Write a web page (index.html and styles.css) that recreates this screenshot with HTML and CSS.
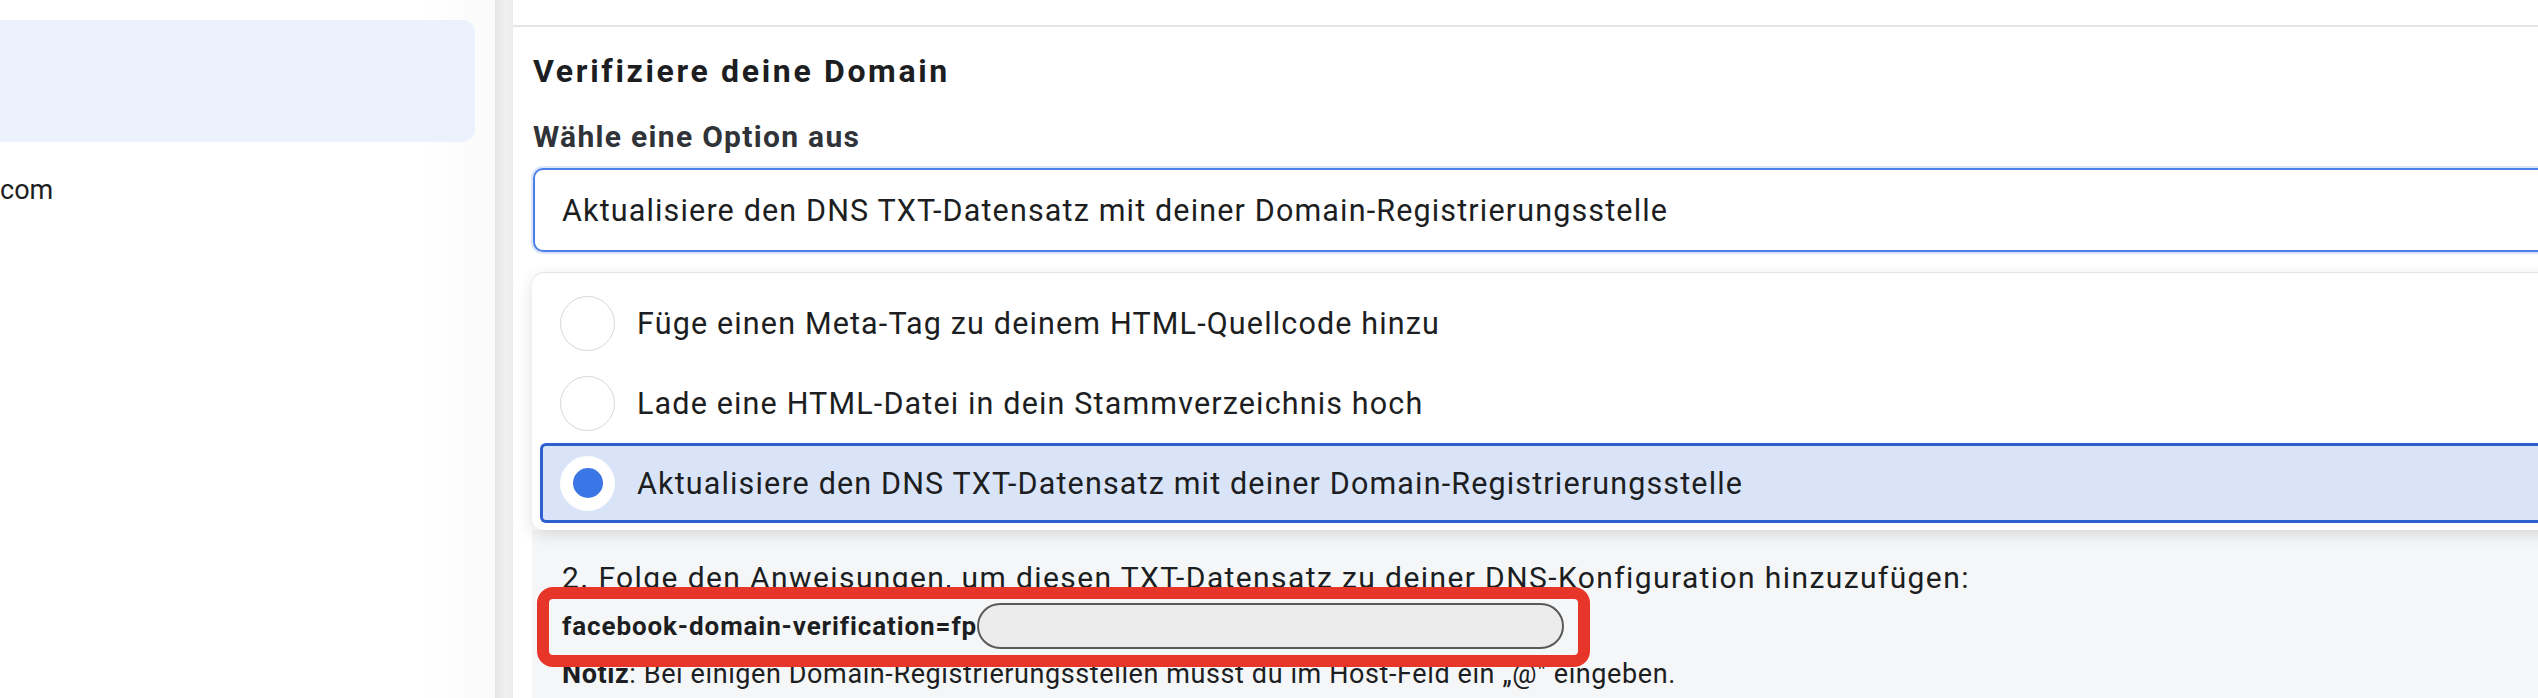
FILE: index.html
```html
<!DOCTYPE html>
<html lang="de">
<head>
  <meta charset="UTF-8">
  <title>Domain verifizieren</title>
  <meta name="viewport" content="width=device-width, initial-scale=1.0">
  <link rel="stylesheet" href="styles.css">
</head>
<body>
  <div class="page">
    <aside class="sidebar">
      <div class="nav-active"></div>
      <div class="nav-item">com</div>
    </aside>
    <div class="divider"></div>

    <main class="main">
      <div class="topbar"></div>
      <section class="verify">
        <h2 class="title">Verifiziere deine Domain</h2>
        <div class="field-label">Wähle eine Option aus</div>
        <div class="select">Aktualisiere den DNS TXT-Datensatz mit deiner Domain-Registrierungsstelle</div>

        <ul class="options">
          <li class="option"><span class="radio"></span>Füge einen Meta-Tag zu deinem HTML-Quellcode hinzu</li>
          <li class="option"><span class="radio"></span>Lade eine HTML-Datei in dein Stammverzeichnis hoch</li>
          <li class="option selected"><span class="radio"></span>Aktualisiere den DNS TXT-Datensatz mit deiner Domain-Registrierungsstelle</li>
        </ul>

        <div class="instructions">
          <p class="step">2. Folge den Anweisungen, um diesen TXT-Datensatz zu deiner DNS-Konfiguration hinzuzufügen:</p>
          <div class="record">
            <b>facebook-domain-verification=fp</b><span class="redacted"></span>
            <span class="highlight"></span>
          </div>
          <p class="note"><b>Notiz</b>: Bei einigen Domain-Registrierungsstellen musst du im Host-Feld ein „@" eingeben.</p>
        </div>
      </section>
    </main>
  </div>
</body>
</html>
```

FILE: styles.css
```css
body {
  margin: 0;
  font-family: Roboto, "Liberation Sans", Arial, sans-serif;
  color: #1c1e21;
  background: #fff;
}
.page {
  display: flex;
  width: 2538px;
  height: 698px;
  overflow: hidden;
}
.sidebar {
  width: 495px;
  flex-shrink: 0;
  background: linear-gradient(to right, #fff 85%, #fafafa);
}
.nav-active {
  margin-top: 20px;
  width: 475px;
  height: 122px;
  background: #ebf1fd;
  border-radius: 0 13px 13px 0;
}
.nav-item {
  margin-top: 28px;
  font-size: 27px;
  line-height: 40px;
}
.divider {
  width: 18px;
  flex-shrink: 0;
  background: linear-gradient(to right, #e6e6e6, #f0f0f0 60%, #ececec);
}
.main {
  flex: 1;
  min-width: 0;
  overflow: hidden;
}
.topbar {
  height: 25px;
  border-bottom: 2px solid #e6e6e6;
}
.verify {
  padding-left: 20px;
}
.title {
  margin: 24px 0 0;
  font-size: 32px;
  line-height: 40px;
  font-weight: 700;
  letter-spacing: 2.65px;
}
.field-label {
  margin-top: 26px;
  font-size: 30px;
  line-height: 40px;
  font-weight: 700;
  letter-spacing: 1.3px;
  color: #303338;
}
.select {
  box-sizing: border-box;
  display: flex;
  align-items: center;
  margin-top: 11px;
  margin-right: -20px;
  height: 84px;
  padding-left: 27px;
  border: 2px solid #4b80e8;
  border-radius: 10px;
  box-shadow: 0 0 0 2px #dbe6fb;
  font-size: 30.5px;
  letter-spacing: 1.15px;
}
.options {
  position: relative;
  z-index: 1;
  list-style: none;
  margin: 21px -20px 0 -1px;
  padding: 10px 0 7px 8px;
  background: #fff;
  border-radius: 12px 0 0 12px;
  box-shadow: 0 -1px 0 #e2e2e2, 0 4px 16px rgba(0, 0, 0, 0.13);
}
.option {
  box-sizing: border-box;
  display: flex;
  align-items: center;
  height: 80px;
  padding-left: 17px;
  border: 3px solid transparent;
  border-right: 0;
  border-radius: 6px 0 0 6px;
  font-size: 30.5px;
  letter-spacing: 1.15px;
}
.option.selected {
  background: #dae4f8;
  border-color: #2d60cd;
}
.radio {
  box-sizing: border-box;
  width: 55px;
  height: 55px;
  margin-right: 22px;
  border: 1.5px solid #d8d8d8;
  border-radius: 50%;
  background: #fff;
  display: flex;
  align-items: center;
  justify-content: center;
  flex-shrink: 0;
}
.selected .radio {
  border-color: #fff;
}
.selected .radio::after {
  content: "";
  width: 30px;
  height: 30px;
  border-radius: 50%;
  background: #3a76e6;
}
.instructions {
  margin: 0 -20px 0 -1px;
  padding: 23px 0 0 30px;
  height: 200px;
  background: #f5f6f7;
}
.step,
.note {
  margin: 0;
  line-height: 49px;
}
.step {
  font-size: 30px;
  letter-spacing: 1.4px;
}
.note {
  font-size: 27px;
  letter-spacing: 0.6px;
}
.record {
  position: relative;
  display: flex;
  align-items: center;
  height: 48px;
  font-size: 26px;
  letter-spacing: 0.9px;
}
.redacted {
  box-sizing: border-box;
  width: 587px;
  height: 46px;
  border: 2px solid #5a5a5a;
  border-radius: 23px;
  background: #ececec;
}
.highlight {
  position: absolute;
  left: -25px;
  top: -15px;
  box-sizing: border-box;
  width: 1053px;
  height: 80px;
  border: 12px solid #e8352a;
  border-radius: 16px;
}
```
